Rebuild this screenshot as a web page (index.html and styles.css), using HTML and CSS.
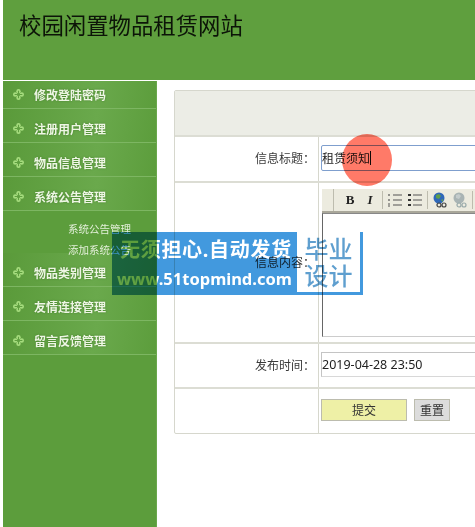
FILE: index.html
```html
<!DOCTYPE html>
<html>

<head>
	<meta charset="utf-8">
	<title>校园闲置物品租赁网站</title>
	<link rel="stylesheet" href="styles.css">
</head>

<body>
	<svg class='defs' width='0' height='0'>
		<symbol id='clover' viewBox='0 0 10 10'>
			<circle cx='5' cy='2' r='2' fill='#a6dc7e' />
			<circle cx='5' cy='8' r='2' fill='#a6dc7e' />
			<circle cx='2' cy='5' r='2' fill='#a6dc7e' />
			<circle cx='8' cy='5' r='2' fill='#a6dc7e' />
			<path d='M4.5 1.5h1v3h3v1h-3v3h-1v-3h-3v-1h3z' fill='#5f9f3f' />
		</symbol>
	</svg>
	<header class='top'>
		<h1 class='top__hed'>校园闲置物品租赁网站</h1>
	</header>
	<div class='main'>
		<nav class='side'>
			<a class='side__item'><svg class='side__icon'><use href='#clover' /></svg>修改登陆密码</a>
			<a class='side__item'><svg class='side__icon'><use href='#clover' /></svg>注册用户管理</a>
			<a class='side__item'><svg class='side__icon'><use href='#clover' /></svg>物品信息管理</a>
			<a class='side__item'><svg class='side__icon'><use href='#clover' /></svg>系统公告管理</a>
			<div class='side__sub'>
				<a>系统公告管理</a>
				<a>添加系统公告</a>
			</div>
			<a class='side__item'><svg class='side__icon'><use href='#clover' /></svg>物品类别管理</a>
			<a class='side__item'><svg class='side__icon'><use href='#clover' /></svg>友情连接管理</a>
			<a class='side__item'><svg class='side__icon'><use href='#clover' /></svg>留言反馈管理</a>
		</nav>
		<section class='content'>
			<div class='form'>
				<div class='form__head'></div>
				<div class='row row--title'>
					<label class='row__label'>信息标题：</label>
					<div class='row__field'>
						<div class='input input--focus'>租赁须知<span class='caret'></span></div>
					</div>
				</div>
				<div class='row row--body'>
					<label class='row__label'>信息内容：</label>
					<div class='row__field row__field--editor'>
						<div class='toolbar'>
							<span class='toolbar__grip'></span>
							<b class='toolbar__b'>B</b>
							<i class='toolbar__i'>I</i>
							<span class='toolbar__sep'></span>
							<svg class='toolbar__icon' viewBox='0 0 16 16'>
								<path d='M2 2v2M2 7v2M1 12h2M1 14h2M6 3h9M6 8h9M6 13h9' stroke='#555' stroke-width='1.2' fill='none' />
							</svg>
							<svg class='toolbar__icon' viewBox='0 0 16 16'>
								<path d='M1 2h3v2h-3zM1 7h3v2h-3zM1 12h3v2h-3z' fill='#333' />
								<path d='M6 3h9M6 8h9M6 13h9' stroke='#555' stroke-width='1.2' fill='none' />
							</svg>
							<span class='toolbar__sep'></span>
							<svg class='toolbar__icon' viewBox='0 0 16 16'>
								<circle cx='7' cy='6' r='5.5' fill='#2f68b8' />
								<path d='M4 3l3-1 2 2-2 3-3-1zM9 8l2-1v3z' fill='#5f9f4c' />
								<circle cx='7' cy='13' r='2' fill='none' stroke='#444' stroke-width='1.2' />
								<circle cx='12' cy='13' r='2' fill='none' stroke='#444' stroke-width='1.2' />
							</svg>
							<svg class='toolbar__icon' viewBox='0 0 16 16'>
								<circle cx='7' cy='6' r='5.5' fill='#a9b4b4' />
								<path d='M4 3l3-1 2 2-2 3-3-1z' fill='#c4cccc' />
								<circle cx='7' cy='13' r='2' fill='none' stroke='#9aa' stroke-width='1.2' />
								<circle cx='12' cy='13' r='2' fill='none' stroke='#9aa' stroke-width='1.2' />
							</svg>
							<span class='toolbar__sep'></span>
						</div>
						<div class='editor'></div>
					</div>
				</div>
				<div class='row row--date'>
					<label class='row__label'>发布时间：</label>
					<div class='row__field'>
						<div class='input input--date'>2019-04-28 23:50</div>
					</div>
				</div>
				<div class='row row--btns'>
					<div class='row__label'></div>
					<div class='row__field row__field--btns'>
						<button class='btn btn--submit'>提交</button>
						<button class='btn btn--reset'>重置</button>
					</div>
				</div>
			</div>
		</section>
	</div>

	<!-- things lying over the page -->
	<div class='click'></div>
	<div class='mark'>
		<div class='mark__text'>
			<p class='mark__line'>无须担心.自动发货</p>
			<p class='mark__url'>www.51topmind.com</p>
		</div>
		<div class='mark__box'>毕业<br>设计</div>
	</div>
</body>

</html>
```

FILE: styles.css
```css
* {
	box-sizing: border-box;
}

html,
body {
	margin: 0;
	padding: 0;
	height: 527px;
	overflow: hidden;
	background: #fff;
	font-family: "Noto Sans", "Noto Sans CJK SC", sans-serif;
	font-size: 12px;
	color: #333;
}

p,
h1 {
	margin: 0;
	font-weight: 400;
}

.defs {
	display: block;
	height: 0;
}

/* header */

.top {
	height: 80px;
	margin-left: 3px;
	padding: 11px 0 0 16px;
	background: #5f9f3e;
}

.top__hed {
	font-size: 22.4px;
	line-height: 30px;
	color: #0c1408;
}

/* sidebar */

.main {
	display: flex;
	padding-left: 3px;
	margin-top: 1px;
	height: 446px;
}

.side {
	flex: none;
	width: 154px;
	background: #5c9d3c;
	border-right: 1px solid #6aa84c;
}

.side__item {
	display: flex;
	align-items: center;
	height: 34px;
	padding: 6px 0 0 10px;
	border-bottom: 1px solid #7db662;
	background: linear-gradient(100deg, #5a9a3a 0%, #6aa94c 60%, #5c9d3c 100%);
	font-weight: 700;
	color: #eef6e4;
	text-shadow: 0 0 2px #3f7a26;
}

.side__item:first-child {
	height: 28px;
	padding-top: 0;
}

.side__icon {
	flex: none;
	width: 11px;
	height: 11px;
	margin-right: 10px;
}

.side__sub {
	display: flex;
	flex-direction: column;
	gap: 9px;
	height: 42px;
	padding: 12px 0 0 65px;
	font-size: 10.5px;
	line-height: 12px;
	color: #e4f0da;
}

/* form */

.content {
	flex: 1;
	min-width: 0;
	padding: 9px 0 0 17px;
}

.form {
	width: 500px;
	border: 1px solid #d6d7cd;
	border-radius: 2px;
}

.form__head {
	height: 46px;
	background: #ecede6;
	border-bottom: 2px solid #dcddd4;
}

.row {
	display: flex;
	border-bottom: 2px solid #dcddd4;
}

.row:last-child {
	border-bottom: 0;
}

.row--title {
	height: 46px;
}

.row--body {
	height: 161px;
}

.row--date {
	height: 45px;
}

.row--btns {
	height: 44px;
}

.row__label {
	flex: none;
	display: flex;
	align-items: center;
	justify-content: flex-end;
	width: 144px;
	padding: 0 3px 2px 0;
	border-right: 1px solid #d6d7cd;
	color: #3a3a3a;
}

.row__field {
	flex: 1;
	display: flex;
	align-items: center;
	padding: 0 0 2px 2px;
}

.row__field--editor {
	flex-direction: column;
	align-items: stretch;
	padding: 6px 0 0 3px;
}

.row__field--btns {
	gap: 7px;
}

.input {
	display: flex;
	align-items: center;
	width: 100%;
	height: 26px;
	border: 1px solid #c4c4c4;
	border-bottom-color: #d8d8d8;
	font-size: 12px;
	color: #222;
}

.input--focus {
	border: 1px solid #7f9fce;
	border-radius: 2px;
}

.input--date {
	height: 25px;
	font-size: 12.5px;
}

.caret {
	width: 1px;
	height: 14px;
	background: #111;
}

.toolbar {
	display: flex;
	align-items: center;
	gap: 4px;
	height: 24px;
	background: #ecebdf;
	border-bottom: 2px solid #a9a79a;
}

.toolbar__grip {
	flex: none;
	width: 12px;
	height: 100%;
	margin-right: 4px;
	border-right: 1px solid #bdbcae;
}

.toolbar__b,
.toolbar__i {
	width: 16px;
	font-family: "Liberation Serif", serif;
	font-size: 13px;
	font-weight: 700;
	text-align: center;
	color: #222;
}

.toolbar__sep {
	width: 1px;
	height: 18px;
	background: #bdbcae;
}

.toolbar__icon {
	flex: none;
	width: 16px;
	height: 16px;
}

.editor {
	height: 124px;
	border-left: 1px solid #666;
	border-top: 1px solid #888;
	border-bottom: 1px solid #ccc;
}

.btn {
	height: 22px;
	padding: 0;
	font-family: inherit;
	font-size: 12px;
	color: #333;
	border: 1px solid #bcbcae;
	border-radius: 0;
}

.btn--submit {
	width: 86px;
	background: #eef0a6;
}

.btn--reset {
	width: 36px;
	background: #dcdcdc;
}

/* click marker and watermark */

.click {
	position: absolute;
	left: 342px;
	top: 134px;
	width: 50px;
	height: 52px;
	border-radius: 50%;
	background: #ff7a68;
	mix-blend-mode: multiply;
}

.mark {
	position: absolute;
	left: 112px;
	top: 232px;
	display: flex;
	width: 251px;
	height: 63px;
	padding-right: 3px;
	background: #4299de;
	mix-blend-mode: multiply;
}

.mark__text {
	flex: 1;
	min-width: 0;
	padding: 3px 0 0 5px;
	font-weight: 700;
	color: #fff;
}

.mark__line {
	padding-left: 3px;
	font-size: 20px;
	line-height: 30px;
	letter-spacing: 0.7px;
	font-weight: 700;
}

.mark__url {
	font-size: 16.5px;
	line-height: 28px;
	white-space: nowrap;
	font-weight: 700;
}

.mark__box {
	flex: none;
	width: 63px;
	height: 60px;
	padding-top: 3px;
	background: #fff;
	font-size: 24px;
	font-weight: 500;
	line-height: 27px;
	text-align: center;
	color: #5f9fcf;
}
```
